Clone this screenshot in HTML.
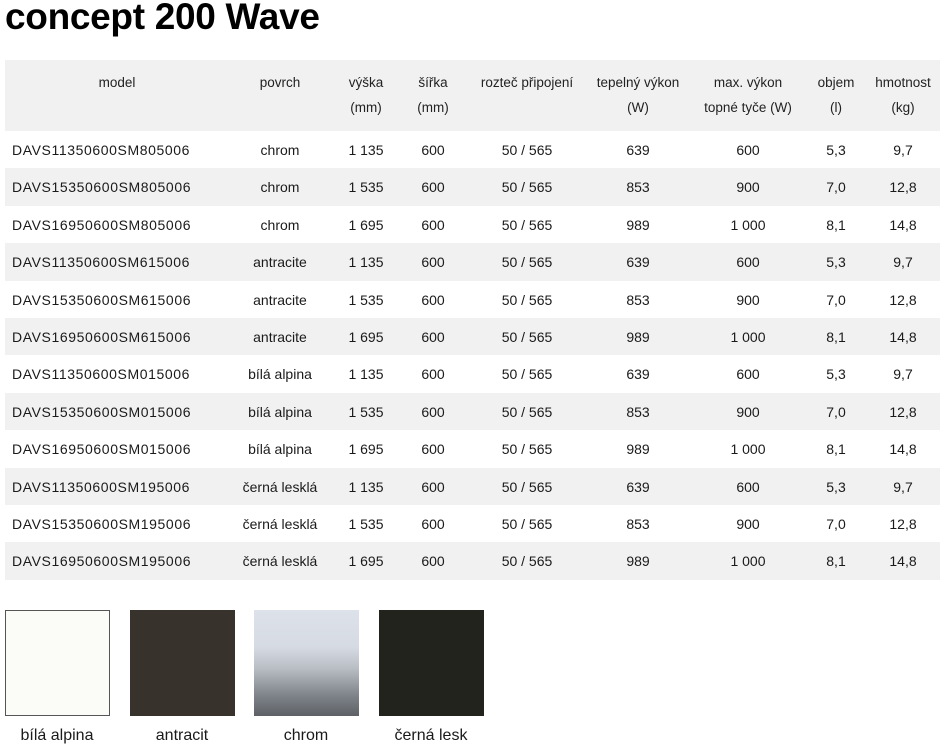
<!DOCTYPE html>
<html><head><meta charset="utf-8"><style>
body{margin:0;width:948px;height:748px;background:#fff;font-family:"Liberation Sans",Arial,sans-serif;color:#1a1a1a;position:relative;overflow:hidden}
h1{position:absolute;left:5px;top:-4px;margin:0;font-size:37px;line-height:42px;font-weight:bold;color:#000;letter-spacing:-0.3px}
.r{position:absolute;left:5px;width:935px;height:37.4px}
.g{background:#f1f1f1}
.r span{position:absolute;top:1px;line-height:37.4px;font-size:14px;width:140px;text-align:center;white-space:nowrap}
.r span.m{left:7px;text-align:left;width:200px;font-size:14px;letter-spacing:0.6px}
.h span{font-size:13.5px;line-height:24.5px;top:11px;color:#222}
.sw{position:absolute;top:610px;width:105px;height:106px}
.lb{position:absolute;top:727px;width:140px;text-align:center;font-size:16px}
</style></head><body>
<h1>concept 200 Wave</h1>

<div class="r g h" style="top:60px;height:71px">
<span style="left:42px">model</span>
<span style="left:205px">povrch</span>
<span style="left:291px">výška<br>(mm)</span>
<span style="left:358px">šířka<br>(mm)</span>
<span style="left:452px">rozteč připojení</span>
<span style="left:563px">tepelný výkon<br>(W)</span>
<span style="left:673px">max. výkon<br>topné tyče (W)</span>
<span style="left:761px">objem<br>(l)</span>
<span style="left:828px">hmotnost<br>(kg)</span>
</div>

<div class="r" style="top:131px"><span class="m">DAVS11350600SM805006</span><span style="left:205px">chrom</span><span style="left:291px">1 135</span><span style="left:358px">600</span><span style="left:452px">50 / 565</span><span style="left:563px">639</span><span style="left:673px">600</span><span style="left:761px">5,3</span><span style="left:828px">9,7</span></div>
<div class="r g" style="top:168.4px"><span class="m">DAVS15350600SM805006</span><span style="left:205px">chrom</span><span style="left:291px">1 535</span><span style="left:358px">600</span><span style="left:452px">50 / 565</span><span style="left:563px">853</span><span style="left:673px">900</span><span style="left:761px">7,0</span><span style="left:828px">12,8</span></div>
<div class="r" style="top:205.8px"><span class="m">DAVS16950600SM805006</span><span style="left:205px">chrom</span><span style="left:291px">1 695</span><span style="left:358px">600</span><span style="left:452px">50 / 565</span><span style="left:563px">989</span><span style="left:673px">1 000</span><span style="left:761px">8,1</span><span style="left:828px">14,8</span></div>
<div class="r g" style="top:243.2px"><span class="m">DAVS11350600SM615006</span><span style="left:205px">antracite</span><span style="left:291px">1 135</span><span style="left:358px">600</span><span style="left:452px">50 / 565</span><span style="left:563px">639</span><span style="left:673px">600</span><span style="left:761px">5,3</span><span style="left:828px">9,7</span></div>
<div class="r" style="top:280.6px"><span class="m">DAVS15350600SM615006</span><span style="left:205px">antracite</span><span style="left:291px">1 535</span><span style="left:358px">600</span><span style="left:452px">50 / 565</span><span style="left:563px">853</span><span style="left:673px">900</span><span style="left:761px">7,0</span><span style="left:828px">12,8</span></div>
<div class="r g" style="top:318px"><span class="m">DAVS16950600SM615006</span><span style="left:205px">antracite</span><span style="left:291px">1 695</span><span style="left:358px">600</span><span style="left:452px">50 / 565</span><span style="left:563px">989</span><span style="left:673px">1 000</span><span style="left:761px">8,1</span><span style="left:828px">14,8</span></div>
<div class="r" style="top:355.4px"><span class="m">DAVS11350600SM015006</span><span style="left:205px">bílá alpina</span><span style="left:291px">1 135</span><span style="left:358px">600</span><span style="left:452px">50 / 565</span><span style="left:563px">639</span><span style="left:673px">600</span><span style="left:761px">5,3</span><span style="left:828px">9,7</span></div>
<div class="r g" style="top:392.8px"><span class="m">DAVS15350600SM015006</span><span style="left:205px">bílá alpina</span><span style="left:291px">1 535</span><span style="left:358px">600</span><span style="left:452px">50 / 565</span><span style="left:563px">853</span><span style="left:673px">900</span><span style="left:761px">7,0</span><span style="left:828px">12,8</span></div>
<div class="r" style="top:430.2px"><span class="m">DAVS16950600SM015006</span><span style="left:205px">bílá alpina</span><span style="left:291px">1 695</span><span style="left:358px">600</span><span style="left:452px">50 / 565</span><span style="left:563px">989</span><span style="left:673px">1 000</span><span style="left:761px">8,1</span><span style="left:828px">14,8</span></div>
<div class="r g" style="top:467.6px"><span class="m">DAVS11350600SM195006</span><span style="left:205px">černá lesklá</span><span style="left:291px">1 135</span><span style="left:358px">600</span><span style="left:452px">50 / 565</span><span style="left:563px">639</span><span style="left:673px">600</span><span style="left:761px">5,3</span><span style="left:828px">9,7</span></div>
<div class="r" style="top:505px"><span class="m">DAVS15350600SM195006</span><span style="left:205px">černá lesklá</span><span style="left:291px">1 535</span><span style="left:358px">600</span><span style="left:452px">50 / 565</span><span style="left:563px">853</span><span style="left:673px">900</span><span style="left:761px">7,0</span><span style="left:828px">12,8</span></div>
<div class="r g" style="top:542.4px"><span class="m">DAVS16950600SM195006</span><span style="left:205px">černá lesklá</span><span style="left:291px">1 695</span><span style="left:358px">600</span><span style="left:452px">50 / 565</span><span style="left:563px">989</span><span style="left:673px">1 000</span><span style="left:761px">8,1</span><span style="left:828px">14,8</span></div>

<div class="sw" style="left:5px;width:103px;height:104px;background:#fbfcf8;border:1px solid #555"></div>
<div class="sw" style="left:130px;background:#37332c"></div>
<div class="sw" style="left:254px;background:linear-gradient(#dde2ea 0%,#d6dbe3 35%,#b9bec5 55%,#80858b 80%,#5d6166 100%)"></div>
<div class="sw" style="left:379px;background:#23231e"></div>
<div class="lb" style="left:-13px">bílá alpina</div>
<div class="lb" style="left:112px">antracit</div>
<div class="lb" style="left:236px">chrom</div>
<div class="lb" style="left:361px">černá lesk</div>
</body></html>
